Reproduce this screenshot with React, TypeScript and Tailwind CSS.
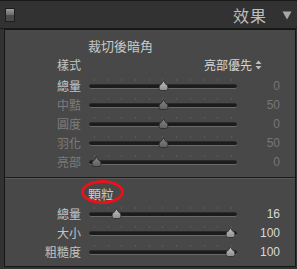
import React from "react";

const font = { fontFamily: '"Noto Sans CJK TC", "Noto Sans", sans-serif' };

function Thumb({ dim }: { dim?: boolean }) {
  const id = dim ? "gd" : "gb";
  return (
    <svg width="11" height="11" viewBox="0 0 11 11" className="block">
      <defs>
        <linearGradient id={id} x1="0" y1="0" x2="0" y2="1">
          <stop offset="0" stopColor={dim ? "#8a8a8a" : "#c8c8c8"} />
          <stop offset="1" stopColor={dim ? "#5e5e5e" : "#8c8c8c"} />
        </linearGradient>
      </defs>
      <path
        d="M5.5 0.5 L7 3.5 L9.5 5.5 L10 8 Q10 10.5 8 10.5 L3 10.5 Q1 10.5 1 8 L1.5 5.5 L4 3.5 Z"
        fill={`url(#${id})`}
        stroke="#2a2a2a"
        strokeWidth="0.8"
      />
    </svg>
  );
}

function Slider({ pos, dim }: { pos: number; dim?: boolean }) {
  return (
    <div className="relative w-[148px] h-[19px]">
      <div className="absolute left-[5px] right-[5px] top-[3px] flex justify-between">
        {Array.from({ length: 11 }).map((_, i) => (
          <div key={i} className="w-px h-[2px] bg-[#5a5a5a]" />
        ))}
      </div>
      <div className="absolute left-0 right-0 top-[8px] h-[5px] rounded-full bg-[#1c1c1c] border-b border-[#6a6a6a] border-t border-t-[#2a2a2a]" />
      <div className="absolute top-[4px]" style={{ left: pos - 5 }}>
        <Thumb dim={dim} />
      </div>
    </div>
  );
}

function Row({
  label,
  value,
  pos,
  dimLabel,
  dimValue,
  dimThumb,
}: {
  label: string;
  value: string;
  pos: number;
  dimLabel?: boolean;
  dimValue?: boolean;
  dimThumb?: boolean;
}) {
  return (
    <div className="flex items-center h-[19px]">
      <div
        className={`w-[76px] text-right text-[12px] leading-none ${dimLabel ? "text-[#7c7c7c]" : "text-[#c4c4c4]"}`}
      >
        {label}
      </div>
      <div className="ml-[8px]">
        <Slider pos={pos} dim={dimThumb} />
      </div>
      <div
        className={`w-[43px] text-right text-[12px] leading-none ${dimValue ? "text-[#767676]" : "text-[#d8d8d8]"}`}
        style={{ fontFamily: '"Liberation Sans", sans-serif' }}
      >
        {value}
      </div>
    </div>
  );
}

export default function App() {
  return (
    <div className="w-[297px] h-[269px] bg-[#323232] flex flex-col overflow-hidden" style={font}>
      <div className="h-px bg-[#1a1a1a]" />
      <div className="h-[28px] flex items-center pl-[5px] pr-[5px] border-b border-[#1a1a1a]">
        <div className="w-[10px] h-[14px] border border-[#1e1e1e] flex flex-col">
          <div className="flex-1 bg-gradient-to-b from-[#9a9a9a] to-[#6a6a6a]" />
          <div className="flex-1 bg-[#4a4a4a]" />
        </div>
        <div className="flex-1" />
        <div className="text-[16px] leading-none text-[#bdbdbd] tracking-[1px]">效果</div>
        <svg width="10" height="9" viewBox="0 0 10 9" className="ml-[15px] mt-[1px]">
          <path d="M0.5 0.5 L9.5 0.5 L5 8.5 Z" fill="#a8a8a8" />
        </svg>
      </div>
      <div className="ml-[4px] mr-px h-[238px] border border-[#161616] bg-[#484848] flex flex-col">
        <div className="flex flex-col h-[148px] border-b border-[#1c1c1c]">
          <div className="h-[8px]" />
          <div className="pl-[83px] text-[13px] leading-none text-[#c8c8c8] h-[14px] flex items-center">裁切後暗角</div>
          <div className="flex items-center h-[22px] mt-[2px]">
            <div className="w-[76px] text-right text-[12px] leading-none text-[#c4c4c4]">樣式</div>
            <div className="flex-1" />
            <div className="text-[12px] leading-none text-[#d6d6d6]">亮部優先</div>
            <svg width="7" height="10" viewBox="0 0 7 10" className="ml-[3px] mr-[33px]">
              <path d="M0.5 4 L3.5 0.5 L6.5 4 Z M0.5 6 L3.5 9.5 L6.5 6 Z" fill="#bdbdbd" />
            </svg>
          </div>
          <Row label="總量" value="0" pos={74} dimValue />
          <Row label="中黠" value="50" pos={74} dimLabel dimValue dimThumb />
          <Row label="圓度" value="0" pos={74} dimLabel dimValue dimThumb />
          <Row label="羽化" value="50" pos={74} dimLabel dimValue dimThumb />
          <Row label="亮部" value="0" pos={7} dimLabel dimValue dimThumb />
        </div>
        <div className="flex flex-col border-t border-[#585858]">
          <div className="h-[6px]" />
          <div className="pl-[83px] h-[16px] flex items-center">
            <div className="relative text-[13px] leading-none text-[#c8c8c8]">
              顆粒
              <div className="absolute left-[-7px] top-[-7px] w-[43px] h-[24px] rounded-[50%] border-[3px] border-[#e8121a]" />
            </div>
          </div>
          <div className="h-[3px]" />
          <Row label="總量" value="16" pos={27} />
          <Row label="大小" value="100" pos={141} />
          <Row label="粗糙度" value="100" pos={141} />
        </div>
      </div>
    </div>
  );
}
